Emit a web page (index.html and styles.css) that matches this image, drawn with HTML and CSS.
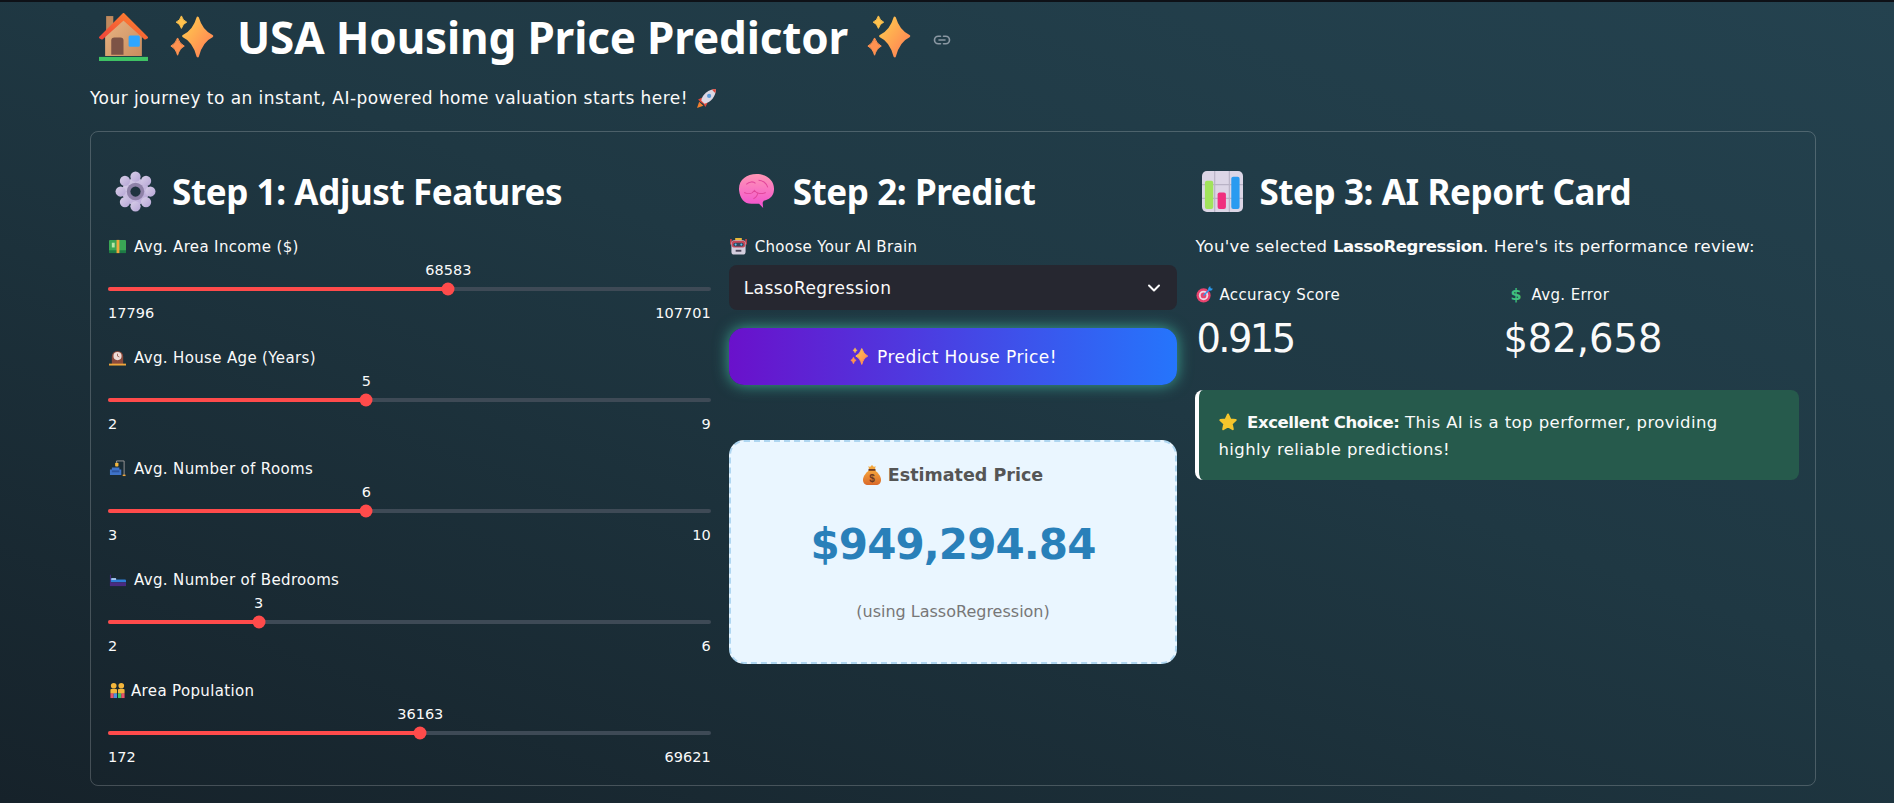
FILE: index.html
```html
<!DOCTYPE html>
<html lang="en">
<head>
<meta charset="utf-8">
<title>USA Housing Price Predictor</title>
<link rel="stylesheet" href="styles.css">
</head>
<body>
<svg class="defs" aria-hidden="true">
  <defs>
    <linearGradient id="gSpark" x1="0" y1="0" x2="1" y2="1"><stop offset="0" stop-color="#ffcf4d"/><stop offset="1" stop-color="#ff7a55"/></linearGradient>
    <linearGradient id="gWall" x1="0" y1="0" x2="1" y2="1"><stop offset="0" stop-color="#eab584"/><stop offset="1" stop-color="#c98d5f"/></linearGradient>
    <linearGradient id="gRoof" x1="0" y1="1" x2="1" y2="0"><stop offset="0" stop-color="#f0443a"/><stop offset="1" stop-color="#ff8a2e"/></linearGradient>
    <linearGradient id="gBrain" x1="0" y1="0" x2="0" y2="1"><stop offset="0" stop-color="#ff96b4"/><stop offset="1" stop-color="#f24fd0"/></linearGradient>
    <linearGradient id="gGear" x1="0" y1="0" x2="1" y2="1"><stop offset="0" stop-color="#d8cfe8"/><stop offset="1" stop-color="#b6a6d6"/></linearGradient>
    <linearGradient id="gBag" x1="0" y1="0" x2="0" y2="1"><stop offset="0" stop-color="#f7a63c"/><stop offset="1" stop-color="#d9692a"/></linearGradient>
    <symbol id="i-house" viewBox="0 0 48 48">
      <rect x="7" y="3" width="7" height="15" fill="#c08a5e"/>
      <path d="M6 21 24 4l18 17v21H6z" fill="url(#gWall)"/>
      <path d="M1 24 24 1l23 23-2 1L24 6 3 25z" fill="url(#gRoof)" stroke="url(#gRoof)" stroke-width="2" stroke-linejoin="round"/>
      <path d="M12 41V27q0-3 3-3h6q3 0 3 3v14z" fill="#7d5346"/>
      <rect x="29" y="22" width="11" height="11" rx="1.500" fill="#2fa6ff"/>
      <rect y="43" width="48" height="4" fill="#3fc465"/>
    </symbol>
    <symbol id="i-spark" viewBox="0 0 48 48">
      <path d="M31 4Q35 18 46 23 35 28 31 44 27 28 16 23 27 18 31 4z" fill="url(#gSpark)" stroke="url(#gSpark)" stroke-width="2.500" stroke-linejoin="round"/>
      <path d="M14 2Q15.500 7 19.500 8.500 15.500 10 14 15 12.500 10 8.500 8.500 12.500 7 14 2z" fill="#ffc24d" stroke="#ffc24d" stroke-linejoin="round"/>
      <path d="M10 25Q12 31 17 33.500 12 36 10 43 8 36 3 33.500 8 31 10 25z" fill="#ff9150" stroke="#ff9150" stroke-linejoin="round"/>
    </symbol>
    <symbol id="i-gear" viewBox="0 0 40 40">
      <g fill="url(#gGear)">
        <circle cx="20" cy="20" r="13"/>
        <circle cx="20" cy="5.500" r="5"/><circle cx="20" cy="34.500" r="5"/><circle cx="5.500" cy="20" r="5"/><circle cx="34.500" cy="20" r="5"/>
        <circle cx="9.700" cy="9.700" r="5"/><circle cx="30.300" cy="9.700" r="5"/><circle cx="9.700" cy="30.300" r="5"/><circle cx="30.300" cy="30.300" r="5"/>
      </g>
      <circle cx="20" cy="20" r="8.500" fill="#8f82a8"/>
      <circle cx="20" cy="20" r="5" fill="#20343f"/>
    </symbol>
    <symbol id="i-brain" viewBox="0 0 40 40">
      <path d="M3 19C2 9 10 3 20 3c11 0 18 7 17 16-.5 6-5 9-10 10l-1 2 .5 5-4-4H15c-7 0-11-5-12-13z" fill="url(#gBrain)"/>
      <path d="M10 13c3-3 7-3 9-1M22 9c4 0 8 3 9 7M8 21c4 2 8 1 10-2 2 3 7 4 11 2M17 27c2-1 4-3 4-5" fill="none" stroke="#e2479c" stroke-width="1"/>
    </symbol>
    <symbol id="i-chart" viewBox="0 0 42 42">
      <rect width="42" height="42" rx="5" fill="#dcd6e6"/>
      <path d="M13 0v42M28 0v42M0 14h42M0 28h42" stroke="#b9b3c6" stroke-width="1.200"/>
      <rect x="3" y="10" width="8.500" height="29" rx="2" fill="#a2e35c"/>
      <rect x="16" y="22" width="8.500" height="17" rx="2" fill="#f0307e"/>
      <rect x="30" y="6" width="8.500" height="33" rx="2" fill="#2a9bf0"/>
    </symbol>
    <symbol id="i-rocket" viewBox="0 0 20 20">
      <path d="M3 13 1 19l6-2z" fill="#f4802e"/>
      <path d="M2 11l4-2 5 5-2 4-2-3-3-2z" fill="#e0493c"/>
      <path d="M5 12C6 6 12 1 19 1c0 7-5 13-11 14z" fill="#dcd8e4"/>
      <circle cx="12.500" cy="7.500" r="2" fill="#5b9ad8"/>
      <path d="M15 1.500 19 1l-.5 4z" fill="#e0493c"/>
    </symbol>
    <symbol id="i-money" viewBox="0 0 18 18">
      <rect y="2" width="18" height="14" rx="1" fill="#3aa655"/>
      <rect y="13" width="18" height="3" fill="#1e7a45"/>
      <rect x="8" y="2" width="3" height="14" fill="#f0a63c"/>
      <rect x="3" y="5" width="3" height="5" fill="#b6e6a6"/>
    </symbol>
    <symbol id="i-clock" viewBox="0 0 18 18">
      <path d="M3 16V8a6 6 0 0 1 12 0v8z" fill="#8a4a3c"/>
      <circle cx="9" cy="7.500" r="4.300" fill="#f0dcd6"/>
      <path d="M9 5v2.500l2 1" fill="none" stroke="#8a4a3c" stroke-width=".8"/>
      <rect y="15.500" width="18" height="2" fill="#f0a63c"/>
    </symbol>
    <symbol id="i-couch" viewBox="0 0 18 18">
      <path d="M1 10h2V8h8v2h2v6H1z" fill="#3f73c8"/>
      <path d="M3 11h8v2H3z" fill="#2c55a0"/>
      <rect x="6.500" y="3" width="3.500" height="4" rx=".8" fill="#f4b63c"/>
      <path d="M8 3V1h8v15" fill="none" stroke="#b9b3b0" stroke-width=".8"/>
      <rect x="14.500" y="15.500" width="3" height="1.500" fill="#f0a63c"/>
    </symbol>
    <symbol id="i-bed" viewBox="0 0 18 18">
      <path d="M1 4h1v12H1z" fill="#4a2a80"/>
      <path d="M2 8h4l2 1h9q1 0 1 1v2H2z" fill="#2f7fd8"/>
      <rect x="2.500" y="7.500" width="5" height="2" fill="#a6c6f0"/>
      <rect x="1" y="12" width="17" height="4" fill="#4a2a80"/>
    </symbol>
    <symbol id="i-people" viewBox="0 0 18 18">
      <circle cx="5" cy="4" r="3" fill="#f4b63c"/><circle cx="13" cy="4" r="3" fill="#f4b63c"/>
      <rect x="1.500" y="7.500" width="7" height="5" rx="1" fill="#f4b63c"/><rect x="9.500" y="7.500" width="7" height="5" rx="1" fill="#f4b63c"/>
      <rect x="1.500" y="12" width="3.500" height="5" fill="#e8536a"/><rect x="5" y="12" width="3.500" height="5" fill="#4a8fe0"/>
      <rect x="9.500" y="12" width="3.500" height="5" fill="#3fc465"/><rect x="13" y="12" width="3.500" height="5" fill="#e8536a"/>
    </symbol>
    <symbol id="i-robot" viewBox="0 0 18 18">
      <path d="M1 1v6M17 1v6" stroke="#d8404a" stroke-width="1.600"/>
      <rect x="5.500" y="0" width="7" height="3" fill="#e8b93c"/>
      <rect x="1.500" y="2.500" width="15" height="15" rx="3" fill="#d4cede"/>
      <rect x="2" y="3" width="14" height="7" rx="2" fill="#c8485a"/>
      <rect x="3.500" y="5" width="11" height="4" rx="2" fill="#34465c"/>
      <circle cx="6" cy="7" r="1.100" fill="#5bc0f0"/><circle cx="12" cy="7" r="1.100" fill="#5bc0f0"/>
      <rect x="6" y="12.500" width="6" height="2" fill="#4a4458"/>
    </symbol>
    <symbol id="i-bag" viewBox="0 0 18 20">
      <path d="M6 5C3 8 0 11 0 15c0 3 2 5 5 5h8c3 0 5-2 5-5 0-4-3-7-6-10z" fill="url(#gBag)"/>
      <path d="M5.500 1 7 2l2-2 2 2 1.500-1L12 5H6z" fill="#f4a63c"/>
      <rect x="5.500" y="4" width="7" height="1.800" fill="#6e3a22"/>
      <text x="9" y="16.500" class="bag-sign">$</text>
    </symbol>
    <symbol id="i-target" viewBox="0 0 18 18">
      <circle cx="8" cy="10" r="7.500" fill="#e8436e"/>
      <circle cx="8" cy="10" r="5" fill="#efd6e4"/>
      <circle cx="8" cy="10" r="3" fill="#e8436e"/>
      <path d="M8 10 15 3" stroke="#2a9bf0" stroke-width="1.500"/>
      <path d="M13 2l2-2 .5 2.500L18 3l-2 2-3-.5z" fill="#2a9bf0"/>
    </symbol>
    <symbol id="i-star" viewBox="0 0 20 20">
      <path d="M10 2.500 12.300 7.500l5.400.6-4 3.700 1.100 5.400-4.800-2.700-4.800 2.700 1.100-5.400-4-3.700 5.400-.6z" fill="#f4c52c" stroke="#f4c52c" stroke-width="2" stroke-linejoin="round"/>
    </symbol>
  </defs>
</svg>

<div class="topbar"></div>
<main class="page">
  <h1 class="title">
    <svg class="ico ico-house"><use href="#i-house"/></svg>
    <svg class="ico ico-spark"><use href="#i-spark"/></svg>
    <span class="title-text">USA Housing Price Predictor</span>
    <svg class="ico ico-spark"><use href="#i-spark"/></svg>
    <svg class="link-ico" viewBox="0 0 24 24" fill="none" stroke="#8b98a3" stroke-width="2.200" stroke-linecap="round"><path d="M10 7H7a5 5 0 0 0 0 10h3M14 7h3a5 5 0 0 1 0 10h-3M8 12h8"/></svg>
  </h1>
  <p class="intro">Your journey to an instant, AI-powered home valuation starts here! <svg class="ico ico-rocket"><use href="#i-rocket"/></svg></p>

  <section class="panel">
    <div class="col col-1">
      <h2 class="step"><svg class="ico ico-step"><use href="#i-gear"/></svg><span>Step 1: Adjust Features</span></h2>
      <div class="slider">
        <div class="field"><svg class="ico ico-sm"><use href="#i-money"/></svg><span>Avg. Area Income ($)</span></div>
        <div class="track-row" style="--v:56.49%"><span class="val">68583</span><div class="track"><div class="fill"></div><div class="thumb"></div></div></div>
        <div class="range"><span>17796</span><span>107701</span></div>
      </div>
      <div class="slider">
        <div class="field"><svg class="ico ico-sm"><use href="#i-clock"/></svg><span>Avg. House Age (Years)</span></div>
        <div class="track-row" style="--v:42.86%"><span class="val">5</span><div class="track"><div class="fill"></div><div class="thumb"></div></div></div>
        <div class="range"><span>2</span><span>9</span></div>
      </div>
      <div class="slider">
        <div class="field"><svg class="ico ico-sm"><use href="#i-couch"/></svg><span>Avg. Number of Rooms</span></div>
        <div class="track-row" style="--v:42.86%"><span class="val">6</span><div class="track"><div class="fill"></div><div class="thumb"></div></div></div>
        <div class="range"><span>3</span><span>10</span></div>
      </div>
      <div class="slider">
        <div class="field"><svg class="ico ico-sm"><use href="#i-bed"/></svg><span>Avg. Number of Bedrooms</span></div>
        <div class="track-row" style="--v:25%"><span class="val">3</span><div class="track"><div class="fill"></div><div class="thumb"></div></div></div>
        <div class="range"><span>2</span><span>6</span></div>
      </div>
      <div class="slider">
        <div class="field field-tight"><svg class="ico ico-sm"><use href="#i-people"/></svg><span>Area Population</span></div>
        <div class="track-row" style="--v:51.82%"><span class="val">36163</span><div class="track"><div class="fill"></div><div class="thumb"></div></div></div>
        <div class="range"><span>172</span><span>69621</span></div>
      </div>
    </div>

    <div class="col col-2">
      <h2 class="step"><svg class="ico ico-step"><use href="#i-brain"/></svg><span>Step 2: Predict</span></h2>
      <div class="field"><svg class="ico ico-sm"><use href="#i-robot"/></svg><span>Choose Your AI Brain</span></div>
      <div class="select"><span>LassoRegression</span>
        <svg class="chev" viewBox="0 0 14 14" fill="none" stroke="#fafafa" stroke-width="2" stroke-linecap="round" stroke-linejoin="round"><path d="M2 4.500 7 9.500l5-5"/></svg>
      </div>
      <button class="predict" type="button"><svg class="ico ico-btn"><use href="#i-spark"/></svg><span>Predict House Price!</span></button>
      <div class="price-card">
        <div class="price-head"><svg class="ico ico-bag"><use href="#i-bag"/></svg><span>Estimated Price</span></div>
        <div class="price">$949,294.84</div>
        <div class="price-note">(using LassoRegression)</div>
      </div>
    </div>

    <div class="col col-3">
      <h2 class="step"><svg class="ico ico-step ico-chart"><use href="#i-chart"/></svg><span>Step 3: AI Report Card</span></h2>
      <p class="lead">You've selected <strong>LassoRegression</strong>. Here's its performance review:</p>
      <div class="metrics">
        <div class="metric">
          <div class="field metric-label"><svg class="ico ico-sm"><use href="#i-target"/></svg><span>Accuracy Score</span></div>
          <div class="metric-val">0.915</div>
        </div>
        <div class="metric">
          <div class="field metric-label"><span class="dollar">$</span><span>Avg. Error</span></div>
          <div class="metric-val">$82,658</div>
        </div>
      </div>
      <div class="alert"><svg class="ico ico-star"><use href="#i-star"/></svg> <strong>Excellent Choice:</strong> This AI is a top performer, providing highly reliable predictions!</div>
    </div>
  </section>
</main>
</body>
</html>
```

FILE: styles.css
```css
* { box-sizing: border-box; }
html, body { height: 100%; }
body {
  margin: 0;
  height: 803px;
  overflow: hidden;
  color: #fafafa;
  font-family: "DejaVu Sans", Inter, sans-serif;
  font-size: 16px;
  background: linear-gradient(200deg, #24424f 0%, #1f3843 45%, #16222a 100%);
}
.defs { position: absolute; width: 0; height: 0; }
.bag-sign { font: 700 10px "Liberation Sans", sans-serif; fill: #6e3a22; text-anchor: middle; }
.topbar { height: 2px; background: #0e1117; }
.page { margin: 0 78px 0 90px; }
.ico { display: block; flex: none; }

.title {
  display: flex;
  align-items: center;
  height: 70px;
  margin: 0;
  padding-left: 9px;
  font-family: "Noto Sans", Lato, sans-serif;
  font-weight: 700;
  font-size: 44px;
  letter-spacing: -.15px;
  color: #fff;
}
.ico-house { width: 49px; height: 49px; }
.ico-spark { width: 50px; height: 46px; }
.title .ico-house { margin-right: 18px; }
.title-text { margin: 0 15px 0 21px; }
.link-ico { width: 18px; height: 18px; margin-left: 20px; margin-top: 6px; }

.intro {
  display: flex;
  align-items: center;
  gap: 8px;
  margin: 14px 0 0;
  height: 24px;
  font-size: 17px;
  letter-spacing: .45px;
}
.ico-rocket { width: 21px; height: 21px; }

.panel {
  display: flex;
  gap: 18px;
  height: 655px;
  margin-top: 21px;
  padding: 0 16px 0 17px;
  border: 1px solid rgba(255,255,255,.2);
  border-radius: 8px;
}
.col-1 { width: 603px; }
.col-2 { width: 449px; }
.col-3 { width: 604px; }

.step {
  display: flex;
  align-items: center;
  gap: 16px;
  height: 42px;
  margin: 38px 0 0;
  font-family: "Noto Sans", Lato, sans-serif;
  font-weight: 700;
  font-size: 35px;
  letter-spacing: -.4px;
  color: #fff;
}
.ico-step { width: 41px; height: 41px; margin-left: 7px; }

.field {
  display: flex;
  align-items: center;
  gap: 8px;
  height: 21px;
  font-size: 15px;
  letter-spacing: .35px;
}
.ico-sm { width: 17px; height: 17px; margin-left: 1px; }
.field-tight { gap: 5px; }

.slider { height: 111px; }
.col-1 .slider:first-of-type { margin-top: 24px; }
.track-row {
  position: relative;
  height: 46px;
}
.val {
  position: absolute;
  left: var(--v);
  top: 5px;
  transform: translateX(-50%);
  font-size: 14.500px;
  line-height: 17px;
}
.track {
  position: absolute;
  left: 0; right: 0;
  top: 30px;
  height: 4px;
  border-radius: 2px;
  background: #3e4a56;
}
.fill {
  width: var(--v);
  height: 100%;
  border-radius: 2px;
  background: #ff4b4b;
}
.thumb {
  position: absolute;
  left: var(--v);
  top: 50%;
  width: 13px;
  height: 13px;
  border-radius: 50%;
  background: #ff4b4b;
  transform: translate(-50%, -50%);
}
.range {
  display: flex;
  justify-content: space-between;
  font-size: 14.500px;
  line-height: 21px;
}

.col-2 .field { margin-top: 24px; }
.select {
  display: flex;
  align-items: center;
  justify-content: space-between;
  height: 45px;
  margin-top: 8px;
  padding: 1px 16px 0 15px;
  border-radius: 8px;
  background: #262730;
  font-size: 17px;
  letter-spacing: .45px;
}
.chev { width: 14px; height: 14px; }
.predict {
  display: flex;
  align-items: center;
  justify-content: center;
  gap: 8px;
  width: 100%;
  height: 57px;
  margin-top: 18px;
  padding: 0;
  border: 0;
  border-radius: 15px;
  color: #fff;
  font: inherit;
  font-size: 17px;
  letter-spacing: .45px;
  background: linear-gradient(90deg, #6a11cb, #2575fc);
  box-shadow: 0 0 15px rgba(72, 209, 180, .7);
}
.ico-btn { width: 20px; height: 19px; }

.price-card {
  display: flex;
  flex-direction: column;
  align-items: center;
  height: 224px;
  margin-top: 55px;
  border: 2px dashed #aed6f1;
  border-radius: 15px;
  background: #eaf6ff;
}
.price-head {
  display: flex;
  align-items: center;
  gap: 7px;
  margin-top: 19px;
  height: 28px;
  font-size: 17.500px;
  font-weight: 700;
  color: #555;
}
.ico-bag { width: 18px; height: 20px; }
.price {
  margin-top: 27px;
  font-size: 42px;
  line-height: 58px;
  font-weight: 700;
  letter-spacing: -.9px;
  color: #2980b9;
}
.price-note {
  margin-top: 26px;
  font-size: 16px;
  line-height: 24px;
  color: #777;
}

.lead { margin: 22px 0 0; font-size: 16.500px; letter-spacing: .28px; line-height: 26px; }
.lead strong, .alert strong { letter-spacing: -.4px; }
.metrics { display: grid; grid-template-columns: 312px 1fr; margin-top: 24px; }
.metric-label { gap: 6px; letter-spacing: .4px; }
.dollar { width: 18px; text-align: center; color: #3fbf7f; font-weight: 700; font-size: 16px; }
.metric-val { margin-top: 9px; font-size: 38.500px; line-height: 50px; font-weight: 400; padding-left: 1px; }
.metric:first-child .metric-val { letter-spacing: -2.600px; }
.metric:last-child .metric-val { margin-left: -5px; }

.alert {
  height: 90px;
  margin-top: 26px;
  padding: 19px 50px 0 19px;
  border-left: 4px solid #fff;
  border-radius: 8px;
  background: #265a4c;
  font-size: 16.500px;
  letter-spacing: .42px;
  line-height: 27px;
}
.ico-star { display: inline-block; width: 20px; height: 20px; vertical-align: -4px; margin-right: 3px; }
```
